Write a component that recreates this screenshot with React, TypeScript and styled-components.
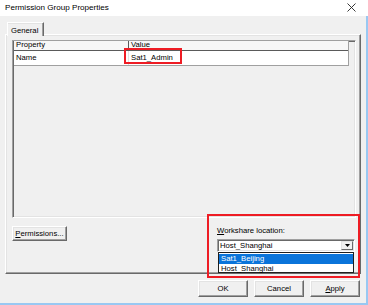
import React from "react";
import styled, { createGlobalStyle } from "styled-components";

const Global = createGlobalStyle`
  html, body { margin: 0; padding: 0; background: #f0f0f0; }
  body { font-family: "Liberation Sans", Arial, sans-serif; }
  * { box-sizing: border-box; }
`;

const Window = styled.div`
  width: 368px;
  height: 305px;
  display: flex;
  flex-direction: column;
  background: #f0f0f0;
  font-size: 7.7px;
  color: #000;
  overflow: hidden;
`;

const TitleBar = styled.div`
  height: 16px;
  flex: none;
  background: #ffffff;
  display: flex;
  align-items: center;
  justify-content: space-between;
  padding: 0 12px 1px 5px;
`;

const Title = styled.span`
  font-size: 8.1px;
  line-height: 10px;
  color: #000;
`;

const Body = styled.div`
  flex: 1;
  display: flex;
  flex-direction: column;
  padding: 6px 5px 6px 5px;
  border-right: 2px solid #99c8f2;
  border-bottom: 2px solid #99c8f2;
`;

const TabStrip = styled.div`
  height: 13px;
  display: flex;
  padding-left: 2px;
  position: relative;
  z-index: 1;
  margin-bottom: -1px;
`;

const Tab = styled.div`
  width: 37px;
  height: 14px;
  background: #f0f0f0;
  border-top: 1px solid #ffffff;
  border-left: 1px solid #ffffff;
  border-right: 1px solid #696969;
  box-shadow: inset -1px 0 #a0a0a0, inset 0 1px #e3e3e3;
  padding: 3px 0 0 3px;
  line-height: 9px;
`;

const Panel = styled.div`
  height: 240px;
  display: flex;
  flex-direction: column;
  padding: 5px 4px 0 6px;
  border-top: 1px solid #ffffff;
  border-left: 1px solid #ffffff;
  border-right: 1px solid #696969;
  border-bottom: 1px solid #696969;
  box-shadow: inset -1px -1px #a0a0a0, inset 1px 1px #e3e3e3;
`;

const ListView = styled.div`
  height: 178px;
  flex: none;
  border-top: 1px solid #a0a0a0;
  border-left: 1px solid #a0a0a0;
  border-right: 1px solid #ffffff;
  border-bottom: 1px solid #ffffff;
  box-shadow: inset 1px 1px #696969, inset -1px -1px #e3e3e3;
  padding: 0 0 0 1px;
  background: #f0f0f0;
`;

const Grid = styled.div`
  width: 335px;
  border-right: 1px solid #a0a0a0;
  border-bottom: 1px solid #a0a0a0;
`;

const HeaderRow = styled.div`
  display: flex;
  height: 10px;
  background: #f7f7f7;
  border-bottom: 1px solid #5a5a5a;
  overflow: hidden;
`;

const HeaderCell = styled.div<{ $w?: number }>`
  ${(p) => (p.$w ? `width: ${p.$w}px; flex: none;` : "flex: 1;")}
  border-right: 1px solid #5a5a5a;
  padding-left: 2px;
  line-height: 8px;
  overflow: hidden;
  white-space: nowrap;
  &:last-child { border-right: none; }
`;

const DataRow = styled.div`
  display: flex;
  height: 14px;
  background: #ffffff;
`;

const DataCell = styled.div<{ $w?: number }>`
  ${(p) => (p.$w ? `width: ${p.$w}px; flex: none;` : "flex: 1;")}
  position: relative;
  padding-left: 2px;
  line-height: 13px;
  white-space: nowrap;
  border-right: 1px solid #e3e3e3;
  &:last-child { border-right: none; }
`;

const Callout = styled.div<{ $l: number; $t: number; $w: number; $h: number }>`
  position: absolute;
  left: ${(p) => p.$l}px;
  top: ${(p) => p.$t}px;
  width: ${(p) => p.$w}px;
  height: ${(p) => p.$h}px;
  border: 2px solid #ee1c24;
  pointer-events: none;
  z-index: 3;
`;

const Footer = styled.div`
  display: flex;
  justify-content: space-between;
  align-items: flex-start;
  padding-top: 8px;
  padding-right: 1px;
`;

const Button = styled.button<{ $w: number; $h: number }>`
  width: ${(p) => p.$w}px;
  height: ${(p) => p.$h}px;
  padding: 0;
  margin: 0;
  font-family: inherit;
  font-size: 7.7px;
  color: #000;
  background: #f0f0f0;
  border-top: 1px solid #ffffff;
  border-left: 1px solid #ffffff;
  border-right: 1px solid #696969;
  border-bottom: 1px solid #696969;
  box-shadow: inset -1px -1px #a0a0a0, inset 1px 1px #e3e3e3;
  display: flex;
  align-items: center;
  justify-content: center;
  line-height: 9px;
`;

const Key = styled.span`
  text-decoration: underline;
`;

const Workshare = styled.div`
  width: 138px;
  position: relative;
  display: flex;
  flex-direction: column;
`;

const Label = styled.div`
  height: 10px;
  line-height: 10px;
  margin-bottom: 3px;
  white-space: nowrap;
`;

const Combo = styled.div`
  height: 13px;
  position: relative;
  display: flex;
  background: #ffffff;
  border-top: 1px solid #a0a0a0;
  border-left: 1px solid #a0a0a0;
  border-right: 1px solid #ffffff;
  border-bottom: 1px solid #ffffff;
  box-shadow: inset 1px 1px #696969, inset -1px -1px #e3e3e3;
`;

const ComboText = styled.div`
  flex: 1;
  padding-left: 2px;
  line-height: 11px;
  white-space: nowrap;
`;

const ArrowButton = styled.div`
  width: 12px;
  margin: 1px 1px 1px 0;
  flex: none;
  background: #f0f0f0;
  border-top: 1px solid #e3e3e3;
  border-left: 1px solid #e3e3e3;
  border-right: 1px solid #696969;
  border-bottom: 1px solid #696969;
  display: flex;
  align-items: center;
  justify-content: center;
`;

const DropList = styled.div`
  position: absolute;
  left: 0;
  right: 0;
  top: 12px;
  height: 21px;
  background: #ffffff;
  border: 1px solid #1e1e1e;
  padding: 1px 0 0 0;
  z-index: 2;
`;

const DropItem = styled.div<{ $sel?: boolean }>`
  height: 9.5px;
  line-height: 9.5px;
  padding-left: 2px;
  white-space: nowrap;
  background: ${(p) => (p.$sel ? "#0a74da" : "transparent")};
  color: ${(p) => (p.$sel ? "#ffffff" : "#000000")};
`;

const ButtonRow = styled.div`
  display: flex;
  justify-content: flex-end;
  gap: 6px;
  margin-top: 6px;
  padding-right: 1px;
`;

const CloseIcon = () => (
  <svg width="9" height="9" viewBox="0 0 9 9">
    <path d="M0.5 0.5 L8.5 8.5 M8.5 0.5 L0.5 8.5" stroke="#222" strokeWidth="0.9" fill="none" />
  </svg>
);

const DownArrow = () => (
  <svg width="5" height="3" viewBox="0 0 5 3">
    <path d="M0 0 H5 L2.5 3 Z" fill="#000" />
  </svg>
);

export default function App() {
  return (
    <>
      <Global />
      <Window>
        <TitleBar>
          <Title>Permission Group Properties</Title>
          <CloseIcon />
        </TitleBar>
        <Body>
          <TabStrip>
            <Tab>General</Tab>
          </TabStrip>
          <Panel>
            <ListView>
              <Grid>
                <HeaderRow>
                  <HeaderCell $w={115}>Property</HeaderCell>
                  <HeaderCell>Value</HeaderCell>
                </HeaderRow>
                <DataRow>
                  <DataCell $w={115}>Name</DataCell>
                  <DataCell>
                    Sat1_Admin
                    <Callout $l={-5} $t={-3} $w={58} $h={16} />
                  </DataCell>
                </DataRow>
              </Grid>
            </ListView>
            <Footer>
              <Button $w={55} $h={15}>
                <Key>P</Key>ermissions...
              </Button>
              <Workshare>
                <Label>
                  <Key>W</Key>orkshare location:
                </Label>
                <Combo>
                  <ComboText>Host_Shanghai</ComboText>
                  <ArrowButton>
                    <DownArrow />
                  </ArrowButton>
                  <DropList>
                    <DropItem $sel>Sat1_Beijing</DropItem>
                    <DropItem>Host_Shanghai</DropItem>
                  </DropList>
                </Combo>
                <Callout $l={-10} $t={-12} $w={153} $h={64} />
              </Workshare>
            </Footer>
          </Panel>
          <ButtonRow>
            <Button $w={50} $h={17}>OK</Button>
            <Button $w={50} $h={17}>Cancel</Button>
            <Button $w={50} $h={17}>
              <Key>A</Key>pply
            </Button>
          </ButtonRow>
        </Body>
      </Window>
    </>
  );
}
